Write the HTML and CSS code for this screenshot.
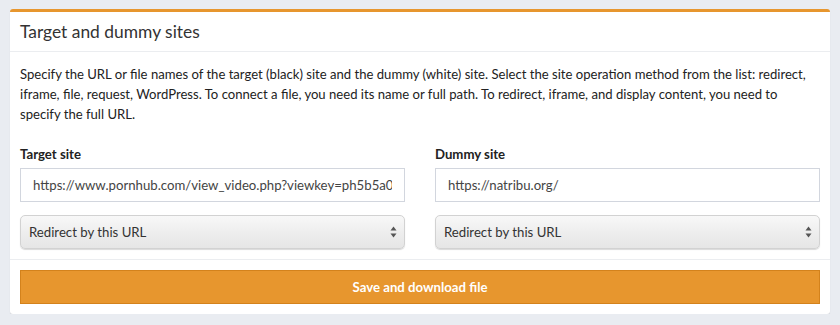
FILE: index.html
```html
<!DOCTYPE html>
<html lang="en">
  <head>
    <meta charset="UTF-8" />
    <meta name="viewport" content="width=device-width, initial-scale=1.0" />
    <title>Target and dummy sites</title>
    <link rel="stylesheet" href="styles.css">
  </head>
  <body>
    <div class="card">
      <div class="card-header">
        <h3>Target and dummy sites</h3>
      </div>
      <div class="card-body">
        <p class="hint">
          Specify the URL or file names of the target (black) site and the dummy (white) site. Select the site operation method from the list: redirect, iframe, file, request, WordPress. To connect a file, you need its name or full path. To redirect, iframe, and display content, you need to specify the full URL.
        </p>
        <div class="sites">
          <div class="site">
            <label for="target">Target site</label>
            <input type="text" id="target" value="https://www.pornhub.com/view_video.php?viewkey=ph5b5a0e1c2f3d4" />
            <div class="select-wrap">
              <select>
                <option>Redirect by this URL</option>
                <option>Show in iframe</option>
                <option>Include file</option>
                <option>Request content</option>
                <option>WordPress</option>
              </select>
              <svg class="arrows" width="7" height="12" viewBox="0 0 7 12">
                <path d="M3.5 0.5 L6.5 4.5 L0.5 4.5 Z" fill="#555" />
                <path d="M3.5 11.5 L6.5 7.5 L0.5 7.5 Z" fill="#555" />
              </svg>
            </div>
          </div>
          <div class="site">
            <label for="dummy">Dummy site</label>
            <input type="text" id="dummy" value="https://natribu.org/" />
            <div class="select-wrap">
              <select>
                <option>Redirect by this URL</option>
                <option>Show in iframe</option>
                <option>Include file</option>
                <option>Request content</option>
                <option>WordPress</option>
              </select>
              <svg class="arrows" width="7" height="12" viewBox="0 0 7 12">
                <path d="M3.5 0.5 L6.5 4.5 L0.5 4.5 Z" fill="#555" />
                <path d="M3.5 11.5 L6.5 7.5 L0.5 7.5 Z" fill="#555" />
              </svg>
            </div>
          </div>
        </div>
      </div>
      <div class="card-footer">
        <button type="button">Save and download file</button>
      </div>
    </div>
  </body>
</html>
```

FILE: styles.css
```css
body {
  margin: 0;
  padding: 9px 10px 0 10px;
  background-color: #e9ecf1;
  font-family: Lato, "Open Sans", sans-serif;
  color: #222;
}

.card {
  background-color: #fff;
  border-top: 3px solid #e7962e;
  border-radius: 3px;
  box-shadow: 0 1px 1px rgba(0, 0, 0, 0.12);
}

.card-header {
  height: 39px;
  padding: 0 10px;
  border-bottom: 1px solid #ebedf0;
  display: flex;
  align-items: center;
}

.card-header h3 {
  margin: 0;
  font-size: 17.4px;
  font-weight: normal;
  color: #333;
}

.card-body {
  padding: 12px 10px 10px 10px;
  border-bottom: 1px solid #ebedf0;
}

.hint {
  margin: 0 0 22px 0;
  font-size: 13.1px;
  line-height: 20px;
}

.sites {
  display: flex;
  gap: 30px;
}

.site {
  flex: 1;
  display: flex;
  flex-direction: column;
}

.site label {
  font-size: 13.2px;
  font-weight: bold;
  color: #222;
  margin-bottom: 6px;
}

.site input {
  height: 34px;
  box-sizing: border-box;
  border: 1px solid #d2d6de;
  padding: 0 12px;
  font-family: inherit;
  font-size: 13.2px;
  color: #444;
  margin-bottom: 13px;
  outline: none;
}

.select-wrap {
  position: relative;
}

.select-wrap select {
  width: 100%;
  height: 34px;
  appearance: none;
  -webkit-appearance: none;
  border: 1px solid #d2d2d2;
  border-radius: 5px;
  padding: 0 8px;
  font-family: inherit;
  font-size: 13.2px;
  color: #333;
  background: linear-gradient(#f8f8f8, #ececec 60%, #e6e6e6);
  box-shadow: 0 1px 1px rgba(0, 0, 0, 0.15);
}

.arrows {
  position: absolute;
  right: 8px;
  top: 11px;
  pointer-events: none;
}

.card-footer {
  padding: 10px;
}

.card-footer button {
  width: 100%;
  height: 34px;
  background-color: #e7962e;
  border: 1px solid #d3821c;
  color: #fff;
  font-family: inherit;
  font-size: 13.2px;
  font-weight: bold;
  cursor: pointer;
}
```
